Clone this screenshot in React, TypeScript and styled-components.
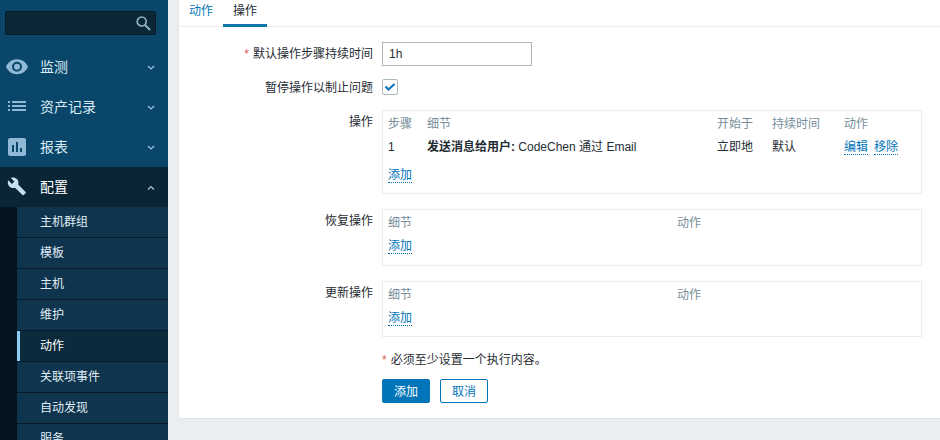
import React from 'react';
import styled, { createGlobalStyle } from 'styled-components';

const GlobalStyle = createGlobalStyle`
  *, *::before, *::after { box-sizing: border-box; }
  body {
    margin: 0;
    overflow: hidden;
    background: #ebeef0;
    color: #1f2c33;
    font: 12px/16px "Liberation Sans", "Noto Sans CJK SC", sans-serif;
  }
`;

const Page = styled.div`
  display: flex;
  height: 440px;
  overflow: hidden;
`;

const Sidebar = styled.aside`
  flex: 0 0 168px;
  display: flex;
  flex-direction: column;
  overflow: hidden;
  background: #0a466a;
`;

const SearchBox = styled.div`
  flex: none;
  display: flex;
  align-items: center;
  justify-content: flex-end;
  width: 151px;
  height: 24px;
  margin: 11px 0 12px 5px;
  padding-right: 3px;
  background: #0b2635;
  border: 1px solid #041b29;
  border-radius: 2px;
`;

const MenuItem = styled.div<{ $open?: boolean }>`
  flex: none;
  display: flex;
  align-items: center;
  height: 40px;
  padding: 0 12px 0 5px;
  background: ${p => (p.$open ? '#0a2636' : 'transparent')};
  color: ${p => (p.$open ? '#ffffff' : '#d9ebf6')};
  font-size: 14px;
  line-height: 20px;
`;

const MenuIcon = styled.svg<{ $open?: boolean }>`
  flex: none;
  width: 24px;
  height: 24px;
  margin-right: 11px;
  fill: ${p => (p.$open ? '#c4e0f2' : '#8fb9d4')};
`;

const Chevron = styled.svg`
  width: 10px;
  height: 10px;
  margin-left: auto;
  fill: none;
  stroke: #a5c8de;
  stroke-width: 1.2;
`;

const SubMenu = styled.div`
  flex: none;
  border-left: 17px solid #04141e;
  background: #0f344d;
`;

const SubItem = styled.div<{ $current?: boolean }>`
  height: 31px;
  padding-left: 23px;
  border-bottom: 1px solid #061a28;
  background: ${p => (p.$current ? 'linear-gradient(90deg, #8dcdf8 3px, #0b2a3b 3px)' : 'transparent')};
  color: ${p => (p.$current ? '#ffffff' : '#e0eef7')};
  line-height: 31px;
`;

const Main = styled.main`
  flex: 1;
  padding-left: 10px;
`;

const Card = styled.section`
  height: 419px;
  background: #ffffff;
  border: 1px solid #dfe4e7;
  border-width: 0 0 1px 1px;
`;

const Tabs = styled.nav`
  display: flex;
  height: 27px;
  border-bottom: 1px solid #ebeef0;
`;

const Tab = styled.a<{ $active?: boolean }>`
  height: 27px;
  padding: 3px 10px 0;
  border-bottom: ${p => (p.$active ? '3px solid #0f75ab' : '0')};
  color: ${p => (p.$active ? '#1f2c33' : '#0275b8')};
`;

const Form = styled.div`
  display: flex;
  flex-direction: column;
  gap: 15px;
  padding-top: 15px;
`;

const FormRow = styled.div<{ $tight?: boolean }>`
  display: grid;
  grid-template-columns: 194px 540px;
  column-gap: 9px;
  margin-top: ${p => (p.$tight ? -2 : 0)}px;
`;

const Label = styled.label<{ $top: number }>`
  padding-top: ${p => p.$top}px;
  height: 16px;
  text-align: right;
  white-space: nowrap;
`;

const Star = styled.span`
  margin-right: 4px;
  color: #e45959;
`;

const TextInput = styled.input`
  width: 150px;
  height: 24px;
  padding: 0 6px;
  border: 1px solid #acb8c0;
  border-radius: 0;
  outline: 0;
  background: #fff;
  color: #1f2c33;
  font: inherit;
`;

const CheckBox = styled.span`
  display: flex;
  align-items: center;
  justify-content: center;
  width: 16px;
  height: 16px;
  border: 1px solid #acb8c0;
  border-radius: 2px;
`;

const TableFrame = styled.div<{ $height: number }>`
  height: ${p => p.$height}px;
  padding: 5px 5px 0;
  border: 1px solid #ebeef0;
`;

const TableRow = styled.div<{ $cols: string; $head?: boolean }>`
  display: grid;
  grid-template-columns: ${p => p.$cols};
  height: 23px;
  color: ${p => (p.$head ? '#768d99' : '#1f2c33')};
  white-space: nowrap;
`;

const TableFooter = styled.div<{ $top: number }>`
  padding-top: ${p => p.$top}px;
`;

const ActionLink = styled.a`
  display: inline-block;
  height: 16px;
  margin-right: 6px;
  border-bottom: 1px dotted #0275b8;
  color: #0275b8;
  line-height: 16px;
`;

const Note = styled.div`
  height: 16px;
`;

const Buttons = styled.div`
  display: flex;
  gap: 10px;
  margin-top: -4px;
  padding-left: 203px;
`;

const Button = styled.button<{ $primary?: boolean }>`
  width: 48px;
  height: 24px;
  padding: 2px 0 0;
  border: 1px solid #0275b8;
  border-radius: 2px;
  background: ${p => (p.$primary ? '#0275b8' : '#ffffff')};
  color: ${p => (p.$primary ? '#ffffff' : '#0275b8')};
  font: inherit;
  line-height: 20px;
`;

const MENU = [
  {
    label: '监测',
    icon: <path fillRule="evenodd" d="M12 4.200C7 4.200 2.700 7.300 1 11.700c1.700 4.400 6 7.500 11 7.500s9.300-3.100 11-7.500c-1.700-4.400-6-7.500-11-7.500zM12 16.700a5 5 0 1 1 0-10 5 5 0 0 1 0 10zm0-2a3 3 0 1 0 0-6 3 3 0 0 0 0 6z" />,
  },
  {
    label: '资产记录',
    icon: <path d="M3 6h2v2H3zm4 0h14v2H7zM3 10h2v2H3zm4 0h14v2H7zM3 14h2v2H3zm4 0h14v2H7z" />,
  },
  {
    label: '报表',
    icon: <path fillRule="evenodd" d="M5 3h14a2 2 0 0 1 2 2v14a2 2 0 0 1-2 2H5a2 2 0 0 1-2-2V5a2 2 0 0 1 2-2zm2 7v7h2v-7zm4-3v10h2V7zm4 6v4h2v-4z" />,
  },
  {
    label: '配置',
    open: true,
    icon: <path transform="translate(2 1.500) scale(0.820)" d="M22.700 19l-9.100-9.100c.9-2.300.4-5-1.500-6.900-2-2-5-2.400-7.400-1.300L9 6 6 9 1.600 4.700C.4 7.100.9 10.100 2.900 12.100c1.900 1.900 4.600 2.400 6.900 1.500l9.100 9.100c.4.4 1 .4 1.400 0l2.300-2.300c.5-.4.5-1.100.1-1.400z" />,
  },
];

const SUBMENU = ['主机群组', '模板', '主机', '维护', '动作', '关联项事件', '自动发现', '服务'];

const STEP_COLS = '39px 290px 55px 72px 1fr';
const DETAIL_COLS = '289px 1fr';

function DetailTable({ label, height }: { label: string; height: number }) {
  return (
    <FormRow>
      <Label $top={4}>{label}</Label>
      <TableFrame $height={height}>
        <TableRow $cols={DETAIL_COLS} $head>
          <span>细节</span>
          <span>动作</span>
        </TableRow>
        <ActionLink>添加</ActionLink>
      </TableFrame>
    </FormRow>
  );
}

export default function App() {
  return (
    <Page>
      <GlobalStyle />
      <Sidebar>
        <SearchBox>
          <svg width="17" height="17" viewBox="0 0 17 17" fill="none" stroke="#8fb3c9">
            <circle cx="6.700" cy="6.500" r="4.500" strokeWidth="1.700" />
            <path d="M10 10l5 5" strokeWidth="2" />
          </svg>
        </SearchBox>
        {MENU.map(item => (
          <MenuItem key={item.label} $open={item.open}>
            <MenuIcon viewBox="0 0 24 24" $open={item.open}>{item.icon}</MenuIcon>
            {item.label}
            <Chevron viewBox="0 0 10 10">
              <path d={item.open ? 'M2 7.500l3-3 3 3' : 'M2 4l3 3 3-3'} />
            </Chevron>
          </MenuItem>
        ))}
        <SubMenu>
          {SUBMENU.map(name => (
            <SubItem key={name} $current={name === '动作'}>{name}</SubItem>
          ))}
        </SubMenu>
      </Sidebar>
      <Main>
        <Card>
          <Tabs>
            <Tab>动作</Tab>
            <Tab $active>操作</Tab>
          </Tabs>
          <Form>
            <FormRow>
              <Label $top={4}><Star>*</Star>默认操作步骤持续时间</Label>
              <TextInput defaultValue="1h" />
            </FormRow>
            <FormRow $tight>
              <Label $top={1}>暂停操作以制止问题</Label>
              <CheckBox>
                <svg width="12" height="12" viewBox="0 0 12 12" fill="none" stroke="#0f75b5" strokeWidth="2.200">
                  <path d="M1.500 5.500l3 3 6-5.500" />
                </svg>
              </CheckBox>
            </FormRow>
            <FormRow>
              <Label $top={4}>操作</Label>
              <TableFrame $height={84}>
                <TableRow $cols={STEP_COLS} $head>
                  <span>步骤</span>
                  <span>细节</span>
                  <span>开始于</span>
                  <span>持续时间</span>
                  <span>动作</span>
                </TableRow>
                <TableRow $cols={STEP_COLS}>
                  <span>1</span>
                  <span><b>发送消息给用户:</b> CodeChen 通过 Email</span>
                  <span>立即地</span>
                  <span>默认</span>
                  <span><ActionLink>编辑</ActionLink><ActionLink>移除</ActionLink></span>
                </TableRow>
                <TableFooter $top={5}><ActionLink>添加</ActionLink></TableFooter>
              </TableFrame>
            </FormRow>
            <DetailTable label="恢复操作" height={57} />
            <DetailTable label="更新操作" height={56} />
            <FormRow>
              <span />
              <Note><Star>*</Star>必须至少设置一个执行内容。</Note>
            </FormRow>
            <Buttons>
              <Button $primary>添加</Button>
              <Button>取消</Button>
            </Buttons>
          </Form>
        </Card>
      </Main>
    </Page>
  );
}
